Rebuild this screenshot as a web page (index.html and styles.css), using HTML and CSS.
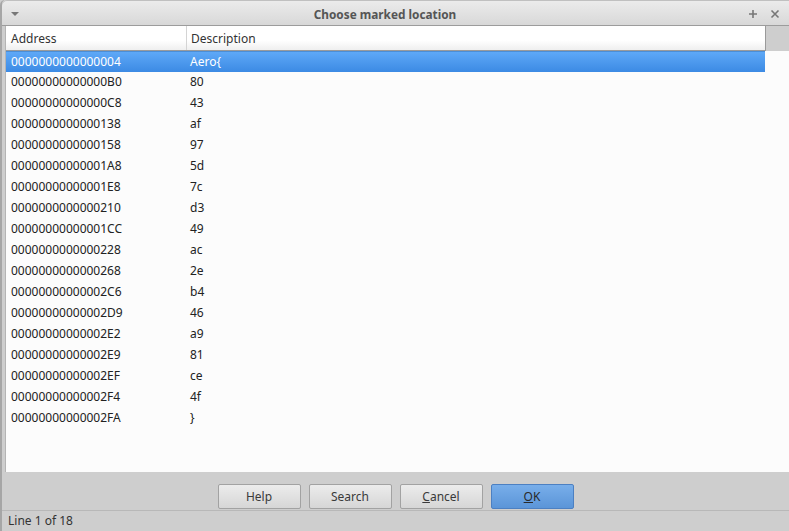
FILE: index.html
```html
<!DOCTYPE html>
<html lang="en">
<head>
    <meta charset="UTF-8">
    <title>Choose marked location</title>
    <link rel="stylesheet" href="styles.css">
</head>
<body>
    <div class="window">
        <div class="titlebar">
            <span class="menu-arrow"></span>
            <span class="title">Choose marked location</span>
            <span class="title-btn">
                <svg width="10" height="10" viewBox="0 0 10 10"><path d="M5 1v8M1 5h8" stroke="#777" stroke-width="1.6"/></svg>
            </span>
            <span class="title-btn">
                <svg width="10" height="10" viewBox="0 0 10 10"><path d="M1.5 1.5l7 7M8.5 1.5l-7 7" stroke="#777" stroke-width="1.6"/></svg>
            </span>
        </div>
        <div class="body">
            <div class="list">
                <div class="list-header">
                    <div class="col-addr">Address</div>
                    <div class="col-desc">Description</div>
                    <div class="corner"></div>
                </div>
                <div class="rows" id="rows"></div>
            </div>
            <div class="buttons">
                <button class="btn">Help</button>
                <button class="btn">Search</button>
                <button class="btn"><u>C</u>ancel</button>
                <button class="btn btn-ok"><u>O</u>K</button>
            </div>
            <div class="status">Line 1 of 18</div>
        </div>
    </div>

    <script>
        const marks = [
            ['0000000000000004', 'Aero{'],
            ['00000000000000B0', '80'],
            ['00000000000000C8', '43'],
            ['0000000000000138', 'af'],
            ['0000000000000158', '97'],
            ['00000000000001A8', '5d'],
            ['00000000000001E8', '7c'],
            ['0000000000000210', 'd3'],
            ['00000000000001CC', '49'],
            ['0000000000000228', 'ac'],
            ['0000000000000268', '2e'],
            ['00000000000002C6', 'b4'],
            ['00000000000002D9', '46'],
            ['00000000000002E2', 'a9'],
            ['00000000000002E9', '81'],
            ['00000000000002EF', 'ce'],
            ['00000000000002F4', '4f'],
            ['00000000000002FA', '}']
        ];

        const rows = document.getElementById('rows');
        marks.forEach((m, i) => {
            const row = document.createElement('div');
            row.className = i === 0 ? 'row selected' : 'row';
            row.innerHTML = `<div class="col-addr">${m[0]}</div><div class="col-desc">${m[1]}</div>`;
            rows.appendChild(row);
        });
    </script>
</body>
</html>
```

FILE: styles.css
```css
html, body {
    margin: 0;
    padding: 0;
    height: 100%;
}
body {
    font-family: 'Noto Sans', 'Open Sans', sans-serif;
    font-size: 12px;
    color: #2e2e2e;
    background: #cecece;
    overflow: hidden;
}
.window {
    height: 531px;
    display: flex;
    flex-direction: column;
    border-left: 2px solid #a6a6a6;
    border-top-left-radius: 5px;
    box-sizing: border-box;
}
.titlebar {
    height: 23px;
    padding: 2px 8px 0 9px;
    border-bottom: 1px solid #9c9c9c;
    background: linear-gradient(#ececec, #d8d8d8);
    border-top-left-radius: 5px;
    box-shadow: inset 0 1px 0 #c0c0c0;
    display: flex;
    align-items: center;
}
.menu-arrow {
    width: 0;
    height: 0;
    border-left: 4px solid transparent;
    border-right: 4px solid transparent;
    border-top: 4px solid #777;
    margin-top: 1px;
}
.title {
    flex: 1;
    text-align: center;
    font-weight: bold;
    font-size: 11.8px;
    color: #555;
    padding-left: 14px;
}
.title-btn {
    width: 12px;
    height: 12px;
    display: flex;
    align-items: center;
    justify-content: center;
    margin-left: 10px;
}
.body {
    flex: 1;
    display: flex;
    flex-direction: column;
}
.list {
    height: 446px;
    margin-left: 3px;
    border-left: 1px solid #b4b4b4;
    background: #fcfcfc;
}
.list-header {
    height: 24px;
    display: flex;
    border-bottom: 1px solid #9a9a9a;
    color: #333;
}
.list-header .col-addr,
.list-header .col-desc {
    background: linear-gradient(#ffffff 60%, #efefef);
    line-height: 25px;
}
.list-header .col-addr {
    border-right: 1px solid #d4d4d4;
}
.list-header .col-desc {
    width: 574px;
    border-right: 1px solid #9a9a9a;
}
.corner {
    flex: 1;
    background: #cecece;
    margin-bottom: -1px;
}
.col-addr {
    width: 175px;
    padding-left: 5px;
}
.col-desc {
    padding-left: 4px;
}
.row {
    height: 21px;
    line-height: 20px;
    display: flex;
    width: 759px;
    color: #222;
}
.row.selected {
    background: linear-gradient(#5ea8f7, #3c8ae4);
    border-top: 1px solid #4b8ed6;
    height: 20px;
    line-height: 19px;
    color: #fff;
}
.buttons {
    height: 39px;
    display: flex;
    justify-content: center;
    align-items: center;
    gap: 8px;
    padding-top: 11px;
    box-sizing: border-box;
    border-bottom: 1px solid #b8b8b8;
}
.btn {
    width: 83px;
    height: 25px;
    font-family: inherit;
    font-size: 12px;
    color: #3a3a3a;
    border: 1px solid #a2a2a2;
    border-radius: 2px;
    background: linear-gradient(#ececec, #d6d6d6);
    padding: 0;
}
.btn-ok {
    background: linear-gradient(#78aeea, #5b95d8);
    border-color: #4c80c2;
    color: #2a2a2a;
}
.status {
    flex: 1;
    padding-left: 6px;
    line-height: 20px;
    color: #333;
}
```
